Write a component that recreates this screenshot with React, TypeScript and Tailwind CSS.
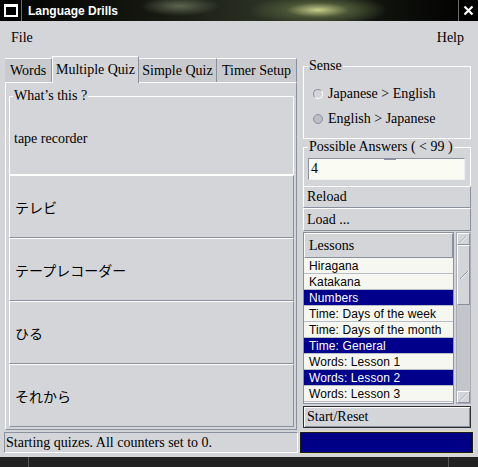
import React from 'react'

const LESSONS: { name: string; sel: boolean }[] = [
  { name: 'Hiragana', sel: false },
  { name: 'Katakana', sel: false },
  { name: 'Numbers', sel: true },
  { name: 'Time: Days of the week', sel: false },
  { name: 'Time: Days of the month', sel: false },
  { name: 'Time: General', sel: true },
  { name: 'Words: Lesson 1', sel: false },
  { name: 'Words: Lesson 2', sel: true },
  { name: 'Words: Lesson 3', sel: false },
]

const ANSWERS = ['テレビ', 'テープレコーダー', 'ひる', 'それから']

const TABS = [
  { label: 'Words', w: 'w-[47px]', active: false },
  { label: 'Multiple Quiz', w: 'w-[87px]', active: true },
  { label: 'Simple Quiz', w: 'w-[78px]', active: false },
  { label: 'Timer Setup', w: 'w-[80px]', active: false },
]

// raised look shared by buttons
const raised = 'border border-t-white border-l-white border-r-[#8a909e] border-b-[#8a909e]'

function Hatch({ className }: { className?: string }) {
  return (
    <svg className={className} viewBox="0 0 12 10" width="12" height="10">
      <line x1="2" y1="9" x2="10" y2="1" stroke="#8a909e" strokeWidth="1" />
      <line x1="3" y1="9" x2="11" y2="1" stroke="#fff" strokeWidth="1" />
    </svg>
  )
}

export default function App() {
  return (
    <div className="w-[478px] h-[467px] bg-[#d4d5d9] flex flex-col overflow-hidden text-black text-[14px] leading-4 font-['Liberation_Serif','Times_New_Roman',serif]">
      {/* title bar */}
      <div className="h-[21px] flex items-stretch bg-[radial-gradient(ellipse_70px_16px_at_318px_10px,#c8cf8a,#4a5536_45%,transparent_100%),radial-gradient(ellipse_40px_10px_at_180px_6px,#5d6650,transparent),linear-gradient(90deg,#030303,#14160f_30%,#2b3024_55%,#10120d_80%,#000)]">
        <div className="w-[22px] flex items-center justify-center border-r border-[#6c6c6c] bg-black">
          <div className="w-[14px] h-[13px] border-2 border-t-[3px] border-white" />
        </div>
        <div className="flex-1 pl-[6px] flex items-center text-white font-bold text-[12px] font-['Liberation_Sans',Arial,sans-serif]">
          Language Drills
        </div>
        <div className="w-[20px] bg-black border-l border-[#6c6c6c] flex items-center justify-center">
          <svg width="11" height="11" viewBox="0 0 11 11">
            <path d="M1.5 1.5 L9.5 9.5 M9.5 1.5 L1.5 9.5" stroke="#fff" strokeWidth="2.2" />
          </svg>
        </div>
      </div>

      {/* menu */}
      <div className="h-[33px] flex items-center justify-between pl-[11px] pr-[14px]">
        <span>File</span>
        <span>Help</span>
      </div>

      <div className="h-[376px] flex">
        {/* left: tabs */}
        <div className="w-[300px] flex flex-col pt-[2px]">
          <div className="h-[26px] flex items-end pl-[5px]">
            {TABS.map(t =>
              t.active ? (
                <div key={t.label} className={`${t.w} h-[27px] -mb-px relative z-10 bg-[#d4d5d9] border-t border-l border-r border-t-white border-l-white border-r-[#8a909e] flex items-center justify-center`}>
                  {t.label}
                </div>
              ) : (
                <div key={t.label} className={`${t.w} h-[24px] bg-[#c9cace] border-t border-r border-t-white border-r-[#8a909e] flex items-center justify-center`}>
                  {t.label}
                </div>
              )
            )}
          </div>
          <div className={`ml-[5px] w-[292px] h-[348px] ${raised} pl-[3px] pt-[5px]`}>
            <fieldset className="w-[285px] h-[87px] border border-white px-0">
              <legend className="ml-[3px] px-[1px]">What’s this ?</legend>
              <div className="pl-[4px] pt-[27px]">tape recorder</div>
            </fieldset>
            {ANSWERS.map(a => (
              <div key={a} className={`w-[285px] h-[63px] ${raised} flex items-center pl-[5px] font-['Noto_Sans_CJK_JP',sans-serif]`}>
                {a}
              </div>
            ))}
          </div>
        </div>

        {/* right column */}
        <div className="flex-1 flex flex-col pl-[3px] pt-[4px]">
          <fieldset className="w-[168px] h-[81px] border border-white px-0">
            <legend className="ml-[4px] px-[1px]">Sense</legend>
            <div className="pt-[7px] pl-[9px]">
              <div className="h-[25px] flex items-center gap-[5px]">
                <span className="w-[10px] h-[10px] rounded-full border border-[#8a909e] border-b-white border-r-white" />
                <span>Japanese &gt; English</span>
              </div>
              <div className="h-[25px] flex items-center gap-[5px]">
                <span className="w-[10px] h-[10px] rounded-full border border-[#8a909e] bg-[#bcbec4]" />
                <span>English &gt; Japanese</span>
              </div>
            </div>
          </fieldset>
          <fieldset className="w-[168px] h-[47px] border border-b-0 border-white px-0">
            <legend className="ml-[4px] px-[1px]">Possible Answers ( &lt; 99 )</legend>
            <div className="relative ml-[4px] mt-[3px] w-[157px] h-[22px] bg-[#fafbf2] border border-t-[#8a909e] border-l-[#8a909e] border-r-[#f0f0f0] border-b-[#f0f0f0] flex items-center pl-[2px]">
              4
              <span className="absolute -top-px left-[75px] w-[12px] h-[2px] bg-[#8a909e]" />
            </div>
          </fieldset>
          <div className={`w-[168px] h-[22px] ${raised} flex items-center pl-[3px]`}>Reload</div>
          <div className={`w-[168px] h-[23px] ${raised} flex items-center pl-[3px]`}>Load ...</div>

          {/* lessons list */}
          <div className="mt-[1px] w-[168px] h-[172px] flex">
            <div className="w-[151px] h-full border border-[#8a909e] bg-[#f7f7f2] flex flex-col">
              <div className={`h-[25px] shrink-0 bg-[#d4d5d9] ${raised} flex items-center pl-[4px]`}>Lessons</div>
              {LESSONS.map(l => (
                <div
                  key={l.name}
                  className={`h-[16px] shrink-0 border-b border-[#b9bdc8] flex items-center pl-[5px] text-[12px] tracking-[0.1px] font-['Liberation_Sans',Arial,sans-serif] ${l.sel ? 'bg-[#00008a] text-white' : ''}`}
                >
                  {l.name}
                </div>
              ))}
            </div>
            <div className="ml-[2px] w-[15px] h-full bg-[#c4c5ca] border border-[#a8acb6] flex flex-col">
              <div className={`h-[12px] ${raised} bg-[#d4d5d9] flex items-center justify-center`}>
                <Hatch />
              </div>
              <div className={`h-[60px] ${raised} bg-[#d4d5d9] flex flex-col items-center pt-[24px]`}>
                <Hatch />
              </div>
              <div className="flex-1" />
              <div className={`h-[12px] ${raised} bg-[#d4d5d9] flex items-center justify-center`}>
                <Hatch />
              </div>
            </div>
          </div>

          <div className="mt-[2px] w-[168px] h-[22px] border border-[#2e2e2e] shadow-[inset_1px_1px_0_#fff,inset_-1px_-1px_0_#8a909e] flex items-center pl-[3px]">
            Start/Reset
          </div>
        </div>
      </div>

      {/* status row */}
      <div className="mt-[2px] h-[21px] flex">
        <div className="ml-[4px] w-[294px] border border-t-[#8a909e] border-l-[#8a909e] border-r-white border-b-white flex items-center pl-[1px]">
          Starting quizes. All counters set to 0.
        </div>
        <div className="ml-[2px] w-[173px] bg-[#000086] border border-[#1c1c1c] shadow-[0_0_0_1px_#e4e0b4]" />
      </div>

      <div className="mt-[4px] h-[10px] flex bg-[#222]">
        <div className="w-[29px] border-r border-[#555]" />
        <div className="w-[420px] border-r border-[#555]" />
      </div>
    </div>
  )
}
